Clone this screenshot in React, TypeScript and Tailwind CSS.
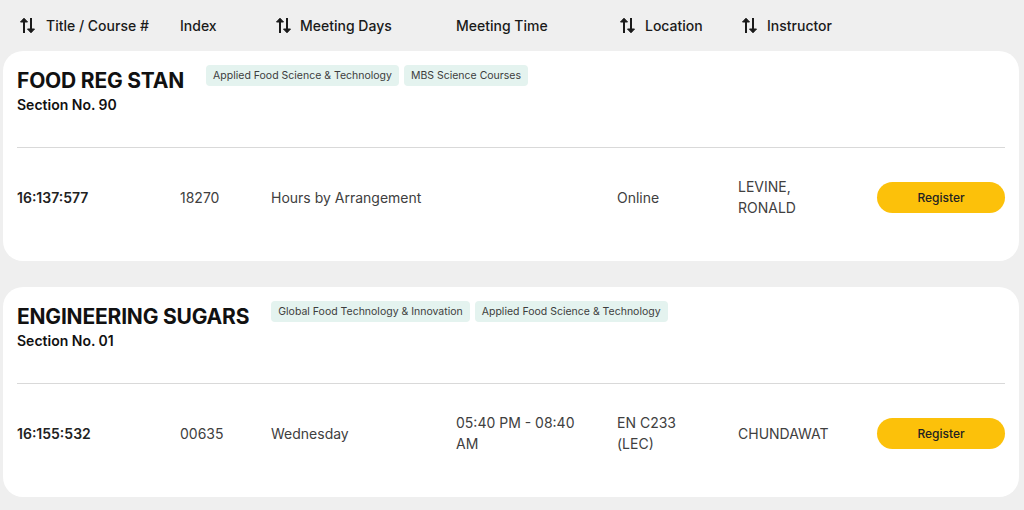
import React from "react";

function SortIcon() {
  return (
    <svg width="15" height="17" viewBox="0 0 15 17" fill="none" className="shrink-0">
      <path d="M4 16V2" stroke="#1a1a1a" strokeWidth="2" />
      <path d="M0.5 5L4 1.2L7.5 5Z" fill="#1a1a1a" stroke="#1a1a1a" strokeWidth="1" strokeLinejoin="round" />
      <path d="M11 1V15" stroke="#1a1a1a" strokeWidth="2" />
      <path d="M7.5 12L11 15.8L14.5 12Z" fill="#1a1a1a" stroke="#1a1a1a" strokeWidth="1" strokeLinejoin="round" />
    </svg>
  );
}

type Course = {
  title: string;
  section: string;
  tags: string[];
  num: string;
  index: string;
  days: string;
  time: string;
  location: string;
  instructor: string;
};

const courses: Course[] = [
  {
    title: "FOOD REG STAN",
    section: "Section No. 90",
    tags: ["Applied Food Science & Technology", "MBS Science Courses"],
    num: "16:137:577",
    index: "18270",
    days: "Hours by Arrangement",
    time: "",
    location: "Online",
    instructor: "LEVINE, RONALD",
  },
  {
    title: "ENGINEERING SUGARS",
    section: "Section No. 01",
    tags: ["Global Food Technology & Innovation", "Applied Food Science & Technology"],
    num: "16:155:532",
    index: "00635",
    days: "Wednesday",
    time: "05:40 PM - 08:40 AM",
    location: "EN C233 (LEC)",
    instructor: "CHUNDAWAT",
  },
];

function Card({ c }: { c: Course }) {
  return (
    <div className="bg-white rounded-[20px] ml-[3px] w-[1016px] pl-[14px] pr-[14px] pt-[14px] pb-[15px]">
      <div className="flex items-start">
        <div className="flex flex-col">
          <div className="text-[21px] leading-[28px] font-bold text-[#111] tracking-[-0.2px] mt-[2px]">{c.title}</div>
          <div className="text-[14px] leading-[20px] font-semibold text-[#111]">{c.section}</div>
        </div>
        <div className="flex gap-[5px] ml-[22px]">
          {c.tags.map((t) => (
            <span
              key={t}
              className="bg-[#e4f3ef] text-[#3d3d3d] text-[10.5px] leading-[21px] h-[21px] px-[7px] rounded-[4px]"
            >
              {t}
            </span>
          ))}
        </div>
      </div>
      <div className="h-px bg-[#d9d9d9] mt-[32px]" />
      <div className="grid grid-cols-[163px_91px_185px_161px_121px_139px_128px] items-center h-[98px] text-[14px] leading-[21px] text-[#404040]">
        <div className="font-semibold text-[#222]">{c.num}</div>
        <div>{c.index}</div>
        <div>{c.days}</div>
        <div className="pr-[20px]">{c.time}</div>
        <div className="pr-[40px]">{c.location}</div>
        <div className="pr-[60px]">{c.instructor}</div>
        <button className="h-[31px] w-[128px] rounded-full bg-[#fcc10a] text-[12px] font-medium text-[#222]">
          Register
        </button>
      </div>
    </div>
  );
}

export default function App() {
  return (
    <div
      className="w-[1024px] h-[510px] bg-[#efefef] overflow-hidden"
      style={{ fontFamily: "Inter, 'Noto Sans', sans-serif" }}
    >
      <div className="grid grid-cols-[160px_96px_180px_164px_122px_1fr] items-center h-[51px] pl-[20px] text-[14px] font-medium text-[#1a1a1a]">
        <div className="flex items-center gap-[11px]">
          <SortIcon />
          <span>Title / Course #</span>
        </div>
        <div>Index</div>
        <div className="flex items-center gap-[9px]">
          <SortIcon />
          <span>Meeting Days</span>
        </div>
        <div>Meeting Time</div>
        <div className="flex items-center gap-[10px]">
          <SortIcon />
          <span>Location</span>
        </div>
        <div className="flex items-center gap-[10px]">
          <SortIcon />
          <span>Instructor</span>
        </div>
      </div>
      <div className="flex flex-col gap-[26px]">
        {courses.map((c) => (
          <Card key={c.num} c={c} />
        ))}
      </div>
    </div>
  );
}
